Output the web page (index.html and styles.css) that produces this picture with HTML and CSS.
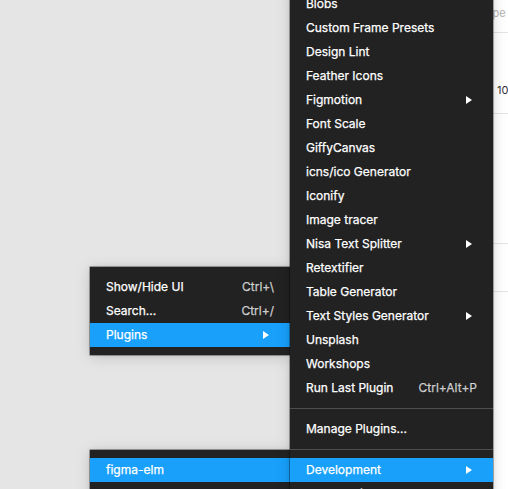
FILE: index.html
```html
<!DOCTYPE html>
<html>
<head>
<meta charset="utf-8">
<link rel="stylesheet" href="styles.css">
</head>
<body>
<div class="app">
  <div class="canvas"></div>
  <aside class="panel">
    <div class="section s1"><span class="label">Type</span></div>
    <div class="section s2"><span class="value">100</span></div>
    <div class="section s3"></div>
    <div class="section s4"></div>
    <div class="section s5"></div>
  </aside>
</div>

<div class="menu menu-main">
  <div class="item">Show/Hide UI<span class="shortcut">Ctrl+\</span></div>
  <div class="item">Search...<span class="shortcut">Ctrl+/</span></div>
  <div class="item active">Plugins<svg class="arrow" viewBox="0 0 6 8"><path d="M0 0L6 4L0 8Z"/></svg></div>
</div>

<div class="menu menu-plugins">
  <div class="item">Blobs</div>
  <div class="item">Custom Frame Presets</div>
  <div class="item">Design Lint</div>
  <div class="item">Feather Icons</div>
  <div class="item">Figmotion<svg class="arrow" viewBox="0 0 6 8"><path d="M0 0L6 4L0 8Z"/></svg></div>
  <div class="item">Font Scale</div>
  <div class="item">GiffyCanvas</div>
  <div class="item">icns/ico Generator</div>
  <div class="item">Iconify</div>
  <div class="item">Image tracer</div>
  <div class="item">Nisa Text Splitter<svg class="arrow" viewBox="0 0 6 8"><path d="M0 0L6 4L0 8Z"/></svg></div>
  <div class="item">Retextifier</div>
  <div class="item">Table Generator</div>
  <div class="item">Text Styles Generator<svg class="arrow" viewBox="0 0 6 8"><path d="M0 0L6 4L0 8Z"/></svg></div>
  <div class="item">Unsplash</div>
  <div class="item">Workshops</div>
  <div class="item">Run Last Plugin<span class="shortcut">Ctrl+Alt+P</span></div>
  <div class="sep"></div>
  <div class="item">Manage Plugins...</div>
  <div class="sep"></div>
  <div class="item active">Development<svg class="arrow" viewBox="0 0 6 8"><path d="M0 0L6 4L0 8Z"/></svg></div>
  <div class="item">New Plugin...</div>
</div>

<div class="menu menu-dev">
  <div class="item active">figma-elm</div>
  <div class="item">hello-world</div>
</div>
</body>
</html>
```

FILE: styles.css
```css
html, body {
  margin: 0;
  padding: 0;
}
body {
  width: 508px;
  height: 489px;
  overflow: hidden;
  position: relative;
  background: #e5e5e5;
  font-family: Inter, "Noto Sans", sans-serif;
  font-size: 12px;
}
.app {
  display: flex;
  height: 489px;
}
.canvas {
  width: 470px;
  flex-shrink: 0;
  background: #e5e5e5;
}
.panel {
  width: 240px;
  flex-shrink: 0;
  background: #ffffff;
  font-size: 11px;
}
.section {
  border-bottom: 1px solid #e5e5e5;
  box-sizing: border-box;
  position: relative;
}
.s1 { height: 33px; padding: 5px 0 0 10px; }
.s2 { height: 81px; padding: 25px 0 0 27px; }
.s3 { height: 130px; }
.s4 { height: 48px; }
.s5 { height: 100px; border-bottom: none; }
.label {
  display: block;
  color: #b3b3b3;
  line-height: 16px;
}
.value {
  display: block;
  color: #333333;
  line-height: 16px;
  margin-top: 24px;
}

.menu {
  position: absolute;
  background: #222222;
  color: #ffffff;
  padding: 8px 0;
  box-sizing: border-box;
  -webkit-text-stroke: 0.25px currentColor;
  box-shadow: 0 0 0 0.5px rgba(0,0,0,0.6), 0 2px 14px rgba(0,0,0,0.15), 0 0 4px rgba(0,0,0,0.1);
}
.menu-main {
  left: 90px;
  top: 267px;
  width: 200px;
}
.menu-plugins {
  left: 290px;
  top: -16px;
  width: 203px;
  z-index: 2;
}
.menu-dev {
  left: 90px;
  top: 450px;
  width: 200px;
}
.item {
  height: 24px;
  line-height: 24px;
  padding: 0 16px;
  display: flex;
  align-items: center;
  justify-content: space-between;
  white-space: nowrap;
}
.item.active {
  background: #18a0fb;
}
.shortcut {
  color: rgba(255,255,255,0.72);
}
.arrow {
  width: 6px;
  height: 8px;
  fill: #ffffff;
  margin-right: 5px;
}
.sep {
  height: 1px;
  background: rgba(255,255,255,0.2);
  margin: 8px 0;
}
```
